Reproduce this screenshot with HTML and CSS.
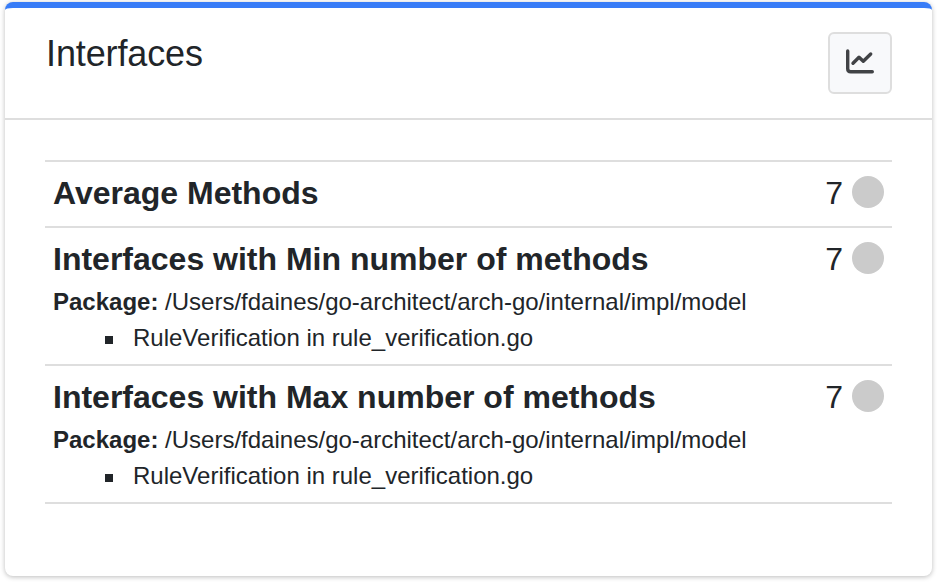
FILE: index.html
```html
<!DOCTYPE html>
<html lang="en"><head><meta charset="utf-8"><title>Interfaces</title><link rel="stylesheet" href="styles.css"></head>
<body>
<section class="card">
<header class="card-header"><h1>Interfaces</h1>
<button class="chart-button" aria-label="Chart"><svg viewBox="0 0 30 28" width="30" height="28" fill="none" stroke="#414346" stroke-width="3.4" stroke-linecap="round" stroke-linejoin="round"><path d="M2.7 2V19.7Q2.7 22.8 5.8 22.8H27.3"/><path d="M8 14.2L14 8.2L18.3 12.3L25.7 5"/></svg></button></header>
<main class="metrics">
<article class="metric"><div class="line"><h2>Average Methods</h2><span class="value">7<i class="dot"></i></span></div></article>
<article class="metric"><div class="line"><h2>Interfaces with Min number of methods</h2><span class="value">7<i class="dot"></i></span></div>
<p><b>Package:</b> /Users/fdaines/go-architect/arch-go/internal/impl/model</p><ul><li>RuleVerification in rule_verification.go</li></ul></article>
<article class="metric"><div class="line"><h2>Interfaces with Max number of methods</h2><span class="value">7<i class="dot"></i></span></div>
<p><b>Package:</b> /Users/fdaines/go-architect/arch-go/internal/impl/model</p><ul><li>RuleVerification in rule_verification.go</li></ul></article>
</main></section>
</body></html>
```
FILE: styles.css
```css
*{box-sizing:border-box}
body{margin:0;padding:2px 6px 6px 5px;height:582px;overflow:hidden;background:#fff;color:#212529;font-family:"Liberation Sans",Arial,sans-serif}
.card{height:574px;border-top:6px solid #387cf7;border-radius:8px;box-shadow:0 1px 5px #0004;background:#fff}
.card-header{height:112px;border-bottom:2px solid #dedede;padding:24px 40px 0 41px;display:flex;justify-content:space-between;align-items:flex-start}
h1,h2,p,ul{margin:0;padding:0}
h1{font-size:36px;line-height:44px;font-weight:400;letter-spacing:-.12px}
.chart-button{width:64px;height:62px;border:2px solid #dedede;border-radius:6px;background:#f8f9fb;padding:0;display:grid;place-items:center}
.metrics{margin:40px 40px 0;border-top:2px solid #dedede}
.metric{border-bottom:2px solid #dedede;padding:0 8px}
.line{height:64px;padding-bottom:2px;display:flex;justify-content:space-between;align-items:center}
.metric:not(:first-child) p{margin-top:-8px}
h2{font-size:32px;font-weight:700;line-height:40px;white-space:nowrap}
.value{display:flex;align-items:center;gap:9px;font-size:32px;line-height:40px}
.dot{width:32px;height:32px;margin-bottom:2px;border-radius:50%;background:#cbcbcb}
p,li{font-size:24px;line-height:36px;white-space:nowrap}
ul{list-style:none;padding-left:52px;padding-bottom:8px}
li{display:flex;align-items:center;gap:20px}
li:before{content:"";width:8px;height:8px;margin-top:4px;background:#212529}
```
